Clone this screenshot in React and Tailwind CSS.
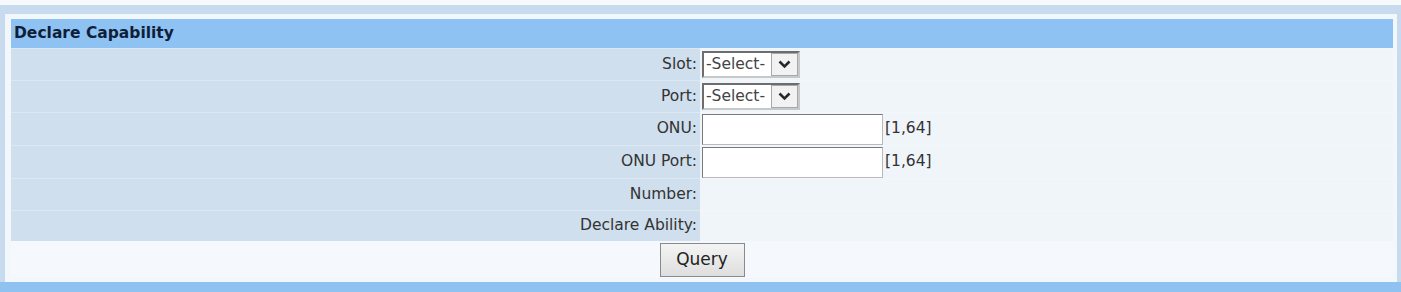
import React from "react";

const font = { fontFamily: "'DejaVu Sans', Verdana, sans-serif" };

const SelectBox = ({ name }) => (
  <div className="relative w-[98px] h-[27px]">
    <select
      name={name}
      defaultValue=""
      className="appearance-none w-full h-full bg-white text-[15.5px] text-[#444] pl-[2px] border-[2px] border-t-[#6d6d6d] border-l-[#6d6d6d] border-r-[#c8c8c8] border-b-[#c8c8c8] outline-none"
    >
      <option value="">-Select-</option>
    </select>
    <span className="pointer-events-none absolute right-[2px] top-[2px] bottom-[2px] w-[27px] flex items-center justify-center bg-[#f2f2f2] border border-[#a8a8a8]">
      <svg width="13" height="9" viewBox="0 0 13 9">
        <path d="M1.5 1.5 L6.5 6.5 L11.5 1.5" fill="none" stroke="#2a2a2a" strokeWidth="2.6" />
      </svg>
    </span>
  </div>
);

const TextBox = ({ name }) => (
  <div className="flex items-center gap-[2px]">
    <input
      name={name}
      type="text"
      className="w-[181px] h-[31px] bg-white border border-t-[#7a7a7a] border-l-[#7a7a7a] border-r-[#b9b9b9] border-b-[#b9b9b9] outline-none px-1 text-[15px]"
    />
    <span className="text-[15.5px] text-[#333]">[1,64]</span>
  </div>
);

const Row = ({ label, h, children }) => (
  <div className={`grid grid-cols-[689px_1fr] ${h}`}>
    <div className="bg-[#cfdfed] border-t border-[#dde8f2] flex items-center justify-end pr-[3px] text-[15.5px] text-[#333]">
      {label}
    </div>
    <div className="bg-[#f0f5fa] border-t border-[#f3f7fb] flex items-center pl-[2px]">
      {children}
    </div>
  </div>
);

export default function App() {
  return (
    <div className="w-[1401px] h-[292px] bg-[#f7fafd] pt-[5px]" style={font}>
      <div className="bg-[#c8dbee] pt-[9px] pl-[5px] pr-[4px]">
        <div className="bg-[#f2f7fc] pt-[5px] pl-[6px] pr-[4px] pb-[4px]">
          <div className="h-[29px] bg-[#8ec2f2] flex items-center pl-[3px] text-[15.5px] font-bold text-[#0f1f3a]">
            Declare Capability
          </div>
          <Row label="Slot:" h="h-[32px]">
            <SelectBox name="slot" />
          </Row>
          <Row label="Port:" h="h-[32px]">
            <SelectBox name="port" />
          </Row>
          <Row label="ONU:" h="h-[33px]">
            <TextBox name="onu" />
          </Row>
          <Row label="ONU Port:" h="h-[33px]">
            <TextBox name="onuPort" />
          </Row>
          <Row label="Number:" h="h-[32px]" />
          <Row label="Declare Ability:" h="h-[31px]" />
          <div className="h-[37px] bg-[#f5f9fd] flex items-center justify-center">
            <button
              type="button"
              className="w-[85px] h-[34px] bg-gradient-to-b from-[#f4f4f4] to-[#dedede] border border-[#8a8a8a] text-[17px] text-[#222]"
            >
              Query
            </button>
          </div>
        </div>
      </div>
      <div className="h-[10px] bg-[#8fc1f1]" />
    </div>
  );
}
